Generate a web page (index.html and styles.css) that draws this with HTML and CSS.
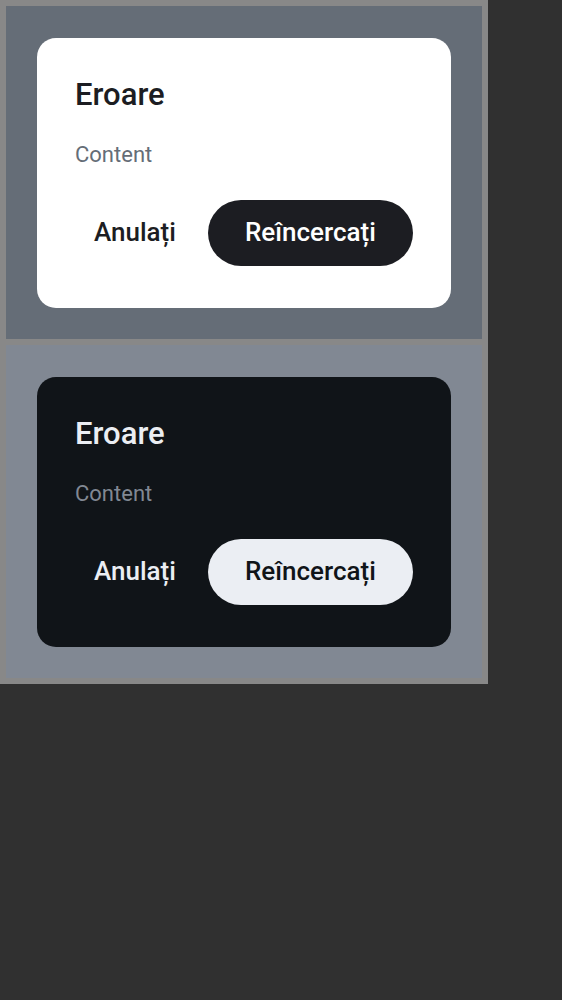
FILE: index.html
```html
<!DOCTYPE html>
<html lang="ro">
<head>
<meta charset="utf-8">
<title>Eroare</title>
<link rel="stylesheet" href="styles.css">
</head>
<body>
<main class="previews">
  <section class="preview light">
    <div class="dialog" role="alertdialog" aria-labelledby="title-light">
      <h2 class="title" id="title-light">Eroare</h2>
      <p class="content">Content</p>
      <div class="actions">
        <button class="button" type="button">Anulați</button>
        <button class="button primary" type="button">Reîncercați</button>
      </div>
    </div>
  </section>
  <section class="preview dark">
    <div class="dialog" role="alertdialog" aria-labelledby="title-dark">
      <h2 class="title" id="title-dark">Eroare</h2>
      <p class="content">Content</p>
      <div class="actions">
        <button class="button" type="button">Anulați</button>
        <button class="button primary" type="button">Reîncercați</button>
      </div>
    </div>
  </section>
</main>
</body>
</html>
```
FILE: styles.css
```css
* {
  box-sizing: border-box;
}

body {
  margin: 0;
  background: #303030;
  font-family: Roboto, "Liberation Sans", sans-serif;
}

.previews {
  display: grid;
  gap: 6px;
  width: fit-content;
  padding: 6px;
  background: #888888;
}

.preview {
  --backdrop: #656d77;
  --surface: #ffffff;
  --text: #1c1d22;
  --muted: #656d77;
  --on-primary: #ffffff;
  padding: 32px 31px 31px;
  background: var(--backdrop);
}

.dark {
  --backdrop: #818893;
  --surface: #101418;
  --text: #ebeef3;
  --muted: #818893;
  --on-primary: #101418;
}

.dialog {
  padding: 38px 38px 42px;
  border-radius: 19px;
  background: var(--surface);
  color: var(--text);
}

.title {
  margin: 0;
  font-size: 31px;
  font-weight: 500;
  line-height: 38px;
}

.content {
  margin: 25px 0 29px;
  color: var(--muted);
  font-size: 22px;
  line-height: 32px;
}

.actions {
  display: flex;
  justify-content: flex-end;
  gap: 13px;
}

.button {
  padding: 0 19px 2px;
  border: 0;
  border-radius: 33px;
  background: transparent;
  color: var(--text);
  font: inherit;
  font-size: 26px;
  font-weight: 500;
  line-height: 64px;
}

.primary {
  padding: 0 37px 2px;
  background: var(--text);
  color: var(--on-primary);
}
```
